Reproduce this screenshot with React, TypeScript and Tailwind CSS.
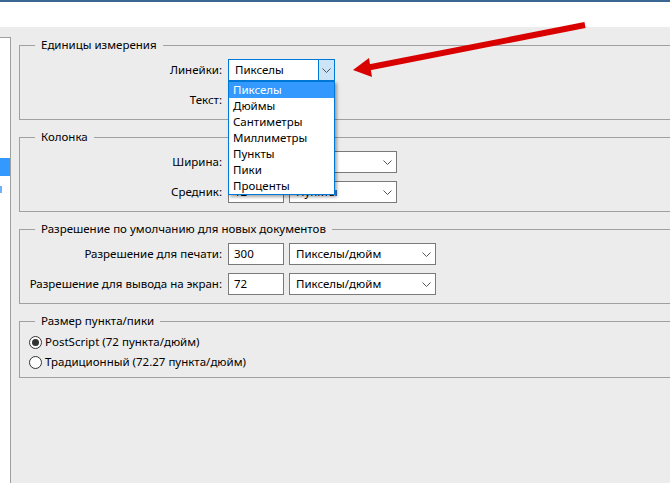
import React from "react"

const font = { fontFamily: '"Noto Sans", "Liberation Sans", sans-serif' }

function Chevron() {
  return (
    <svg width="9" height="5" viewBox="0 0 9 5" className="shrink-0">
      <path d="M0.5 0.5 L4.5 4.5 L8.5 0.5" fill="none" stroke="#555" strokeWidth="1" />
    </svg>
  )
}

function Select({ value, width }: { value?: string; width: string }) {
  return (
    <div className={`${width} h-[22px] bg-white border border-[#7a7a7a] flex items-center pl-[6px] pr-[4px]`}>
      <span className="flex-1 truncate">{value}</span>
      <Chevron />
    </div>
  )
}

function Input({ value }: { value?: string }) {
  return (
    <div className="w-[56px] h-[22px] bg-white border border-[#7a7a7a] flex items-center pl-[5px]">{value}</div>
  )
}

function Row({ label, children }: { label: string; children: React.ReactNode }) {
  return (
    <div className="h-[22px] flex items-center">
      <div className="w-[203px] text-right pr-px">{label}</div>
      <div className="ml-[5px] flex gap-[5px]">{children}</div>
    </div>
  )
}

function Group({ title, height, children }: { title: string; height: string; children: React.ReactNode }) {
  return (
    <div className={`${height} border border-r-0 border-[#a0a0a0]`}>
      <div className="-mt-[9px] ml-[15px] px-[6px] w-fit h-[16px] leading-[16px] bg-[#ececec]">{title}</div>
      {children}
    </div>
  )
}

function Radio({ checked, label }: { checked?: boolean; label: string }) {
  return (
    <div className="h-[20px] flex items-center pl-[9px]">
      <div className="w-[13px] h-[13px] rounded-full border border-[#333] bg-white flex items-center justify-center">
        {checked && <div className="w-[7px] h-[7px] rounded-full bg-[#333]" />}
      </div>
      <span className="ml-[3px]">{label}</span>
    </div>
  )
}

const units = ["Пикселы", "Дюймы", "Сантиметры", "Миллиметры", "Пункты", "Пики", "Проценты"]

export default function App() {
  return (
    <div className="relative w-[670px] h-[483px] overflow-hidden bg-[#ececec] text-[11.5px] text-black" style={font}>
      <div className="h-[2px] bg-[#3a6791]" />
      <div className="h-[25px] bg-white" />

      <div className="flex">
        <div className="mt-[10px] w-[11px] h-[500px] shrink-0 bg-white border-t border-r border-[#a0a0a0]">
          <div className="mt-[120px] h-[18px] bg-[#3399ff]" />
          <div className="mt-[10px] w-[2px] h-[7px] bg-[#6ab4ff]" />
        </div>

        <div className="ml-[8px] pt-[18px] w-[700px] flex flex-col gap-[17px]">
          <Group title="Единицы измерения" height="h-[75px]">
            <div className="mt-[6px] flex flex-col gap-[8px]">
              <Row label="Линейки:">
                <div className="w-[107px] h-[22px] bg-white border border-[#0078d7] flex">
                  <span className="flex-1 pl-[6px] leading-[20px]">Пикселы</span>
                  <div className="w-[16px] bg-[#cce4f7] border-l border-[#0078d7] flex items-center justify-center">
                    <Chevron />
                  </div>
                </div>
              </Row>
              <Row label="Текст:">
                <Select width="w-[107px]" />
              </Row>
            </div>
          </Group>

          <Group title="Колонка" height="h-[75px]">
            <div className="mt-[6px] flex flex-col gap-[8px]">
              <Row label="Ширина:">
                <Input />
                <Select width="w-[108px]" />
              </Row>
              <Row label="Средник:">
                <Input value="12" />
                <Select value="Пункты" width="w-[108px]" />
              </Row>
            </div>
          </Group>

          <Group title="Разрешение по умолчанию для новых документов" height="h-[75px]">
            <div className="mt-[6px] flex flex-col gap-[8px]">
              <Row label="Разрешение для печати:">
                <Input value="300" />
                <Select value="Пикселы/дюйм" width="w-[147px]" />
              </Row>
              <Row label="Разрешение для вывода на экран:">
                <Input value="72" />
                <Select value="Пикселы/дюйм" width="w-[147px]" />
              </Row>
            </div>
          </Group>

          <Group title="Размер пункта/пики" height="h-[57px]">
            <div className="mt-[3px]">
              <Radio checked label="PostScript (72 пункта/дюйм)" />
              <Radio label="Традиционный (72.27 пункта/дюйм)" />
            </div>
          </Group>
        </div>
      </div>

      {/* open dropdown list */}
      <div className="absolute left-[228px] top-[81px] w-[107px] bg-white border border-[#0078d7] shadow-[2px_2px_3px_rgba(0,0,0,0.35)]">
        {units.map((u, i) => (
          <div
            key={u}
            className={i === 0 ? "h-[16px] leading-[16px] pl-[4px] bg-[#3399ff] text-white" : "h-[16px] leading-[16px] pl-[4px]"}
          >
            {u}
          </div>
        ))}
      </div>

      {/* red annotation arrow */}
      <svg className="absolute left-0 top-0 pointer-events-none" width="670" height="483">
        <line x1="585" y1="25" x2="366" y2="68" stroke="#d90000" strokeWidth="6" />
        <polygon points="353,70 369,58 372,77" fill="#d90000" />
      </svg>
    </div>
  )
}
